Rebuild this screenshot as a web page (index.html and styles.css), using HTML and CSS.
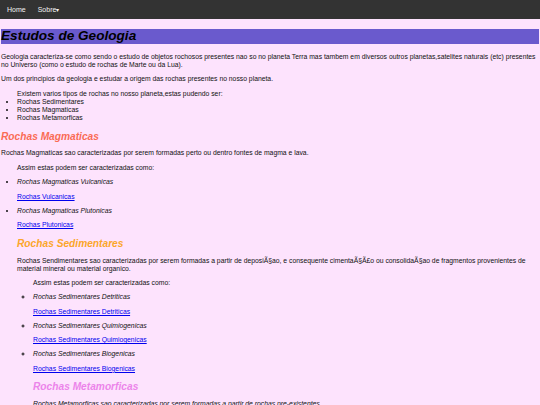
FILE: index.html
```html
<!DOCTYPE html>
<html lang="pt">
<head>
<meta charset="utf-8">
<title>Estudos de Geologia</title>
<link rel="stylesheet" href="styles.css">
</head>
<body>
<nav class="navbar">
  <a class="nav-link" href="#">Home</a>
  <a class="nav-link" href="#">Sobre<span class="caret">&#9662;</span></a>
</nav>
<main class="content">
  <h1 class="title">Estudos de Geologia</h1>
  <p>Geologia caracteriza-se como sendo o estudo de objetos rochosos presentes nao so no planeta Terra mas tambem em diversos outros planetas,satelites naturais (etc) presentes no Universo (como o estudo de rochas de Marte ou da Lua).</p>
  <p>Um dos principios da geologia e estudar a origem das rochas presentes no nosso planeta.</p>
  <ul class="list">
    Existem varios tipos de rochas no nosso planeta,estas pudendo ser:
    <li>Rochas Sedimentares</li>
    <li>Rochas Magmaticas</li>
    <li>Rochas Metamorficas</li>
  </ul>
  <h2 class="sec sec-mag">Rochas Magmaticas</h2>
  <p>Rochas Magmaticas sao caracterizadas por serem formadas perto ou dentro fontes de magma e lava.</p>
  <ul class="list">
    <p>Assim estas podem ser caracterizadas como:</p>
    <li><p><em>Rochas Magmaticas Vulcanicas</em></p></li>
    <p><a href="#">Rochas Vulcanicas</a></p>
    <li><p><em>Rochas Magmaticas Plutonicas</em></p></li>
    <p><a href="#">Rochas Plutonicas</a></p>
    <h2 class="sec sec-sed">Rochas Sedimentares</h2>
    <p>Rochas Sendimentares sao caracterizadas por serem formadas a partir de deposiÃ§ao, e consequente cimentaÃ§Ã£o ou consolidaÃ§ao de fragmentos provenientes de material mineral ou material organico.</p>
    <ul class="list">
      <p>Assim estas podem ser caracterizadas como:</p>
      <li><p><em>Rochas Sedimentares Detriticas</em></p></li>
      <p><a href="#">Rochas Sedimentares Detriticas</a></p>
      <li><p><em>Rochas Sedimentares Quimiogenicas</em></p></li>
      <p><a href="#">Rochas Sedimentares Quimiogenicas</a></p>
      <li><p><em>Rochas Sedimentares Biogenicas</em></p></li>
      <p><a href="#">Rochas Sedimentares Biogenicas</a></p>
      <h2 class="sec sec-met">Rochas Metamorficas</h2>
      <p><em>Rochas Metamorficas sao caracterizadas por serem formadas a partir de rochas pre-existentes</em></p>
    </ul>
  </ul>
</main>
</body>
</html>
```

FILE: styles.css
```css
html, body {
  margin: 0;
  padding: 0;
}
body {
  background: #fde3fd;
  font-family: "Liberation Sans", Arial, sans-serif;
  font-size: 6.8px;
  line-height: 8px;
  color: #111;
}
.navbar {
  display: flex;
  align-items: center;
  height: 19px;
  padding-left: 1px;
  background: #333;
}
.nav-link {
  padding: 0 6px;
  color: #f2f2f2;
  text-decoration: none;
  font-size: 7px;
}
.caret {
  font-size: 6px;
}
.content {
  padding: 0 1px;
}
.title {
  font-size: 2em;
  line-height: 1.1;
  font-style: italic;
  font-weight: bold;
  margin: 10px 0 9px;
  background: #6a5acd;
  color: #000;
}
p {
  margin: 6.3px 0;
}
.list {
  margin: 6.8px 0;
  padding-left: 16px;
}
.list .list {
  margin: 0;
  list-style-type: circle;
}
.sec {
  font-size: 1.5em;
  line-height: 1.15;
  font-style: italic;
  font-weight: bold;
  margin: 0.83em 0 0.7em;
}
.sec-mag { color: #fa6b55; }
.sec-sed { color: #fba62a; }
.sec-met { color: #ec84ea; }
a {
  color: #0000ee;
}
```
